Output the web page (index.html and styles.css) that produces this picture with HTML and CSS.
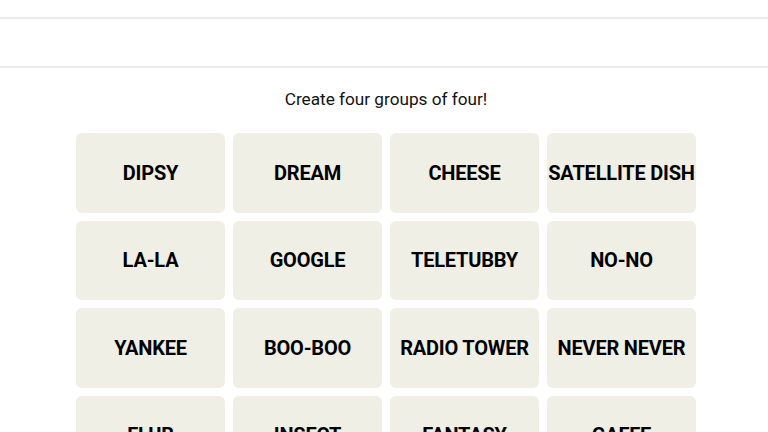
FILE: index.html
```html
<!DOCTYPE html>
<html>
<head>
<meta charset="utf-8">
<link rel="stylesheet" href="styles.css">
</head>
<body>
<div class="top"></div>
<div class="toolbar"></div>
<main class="game">
  <p class="prompt">Create four groups of four!</p>
  <div class="board">
    <div class="tile">DIPSY</div>
    <div class="tile">DREAM</div>
    <div class="tile">CHEESE</div>
    <div class="tile">SATELLITE DISH</div>
    <div class="tile">LA-LA</div>
    <div class="tile">GOOGLE</div>
    <div class="tile">TELETUBBY</div>
    <div class="tile">NO-NO</div>
    <div class="tile">YANKEE</div>
    <div class="tile">BOO-BOO</div>
    <div class="tile">RADIO TOWER</div>
    <div class="tile">NEVER NEVER</div>
    <div class="tile">FLUB</div>
    <div class="tile">INSECT</div>
    <div class="tile">FANTASY</div>
    <div class="tile">GAFFE</div>
  </div>
</main>
</body>
</html>
```
FILE: styles.css
```css
html, body {
  margin: 0;
  padding: 0;
  background: #ffffff;
  overflow: hidden;
}
body {
  font-family: Roboto, "Liberation Sans", sans-serif;
  color: #000;
}
.top {
  height: 17px;
  border-bottom: 2px solid #ebebeb;
}
.toolbar {
  height: 47px;
  border-bottom: 2px solid #ebebeb;
}
.game {
  display: flex;
  flex-direction: column;
  align-items: center;
  padding-left: 4px;
}
.prompt {
  margin: 21px 0 0;
  font-size: 17.2px;
  line-height: 20px;
  color: #121212;
}
.board {
  margin-top: 24px;
  display: grid;
  grid-template-columns: repeat(4, 149px);
  grid-auto-rows: 79.5px;
  gap: 8px;
}
.tile {
  background: #efefe6;
  border-radius: 6px;
  display: flex;
  align-items: center;
  justify-content: center;
  font-weight: 700;
  font-size: 20px;
  letter-spacing: -0.2px;
  white-space: nowrap;
  color: #000;
}
```
